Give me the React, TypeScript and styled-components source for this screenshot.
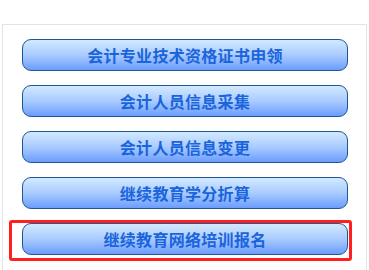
import React from "react";
import styled, { createGlobalStyle } from "styled-components";

const GlobalStyle = createGlobalStyle`
  html, body {
    margin: 0;
    padding: 0;
    background: #fff;
    overflow: hidden;
    font-family: "Noto Sans CJK SC", "Liberation Sans", sans-serif;
  }
`;

const items = [
  "会计专业技术资格证书申领",
  "会计人员信息采集",
  "会计人员信息变更",
  "继续教育学分折算",
  "继续教育网络培训报名",
];

function App() {
  return (
    <>
      <GlobalStyle />
      <StyledPanel>
        {items.map((label, i) => (
          <StyledItem key={label}>
            <StyledButton>{label}</StyledButton>
            {i === items.length - 1 && <StyledHighlight />}
          </StyledItem>
        ))}
      </StyledPanel>
    </>
  );
}

const StyledPanel = styled.div`
  margin: 24px 0 0 2px;
  width: 365px;
  height: 246px;
  border: 1px solid #e3e3e3;
  border-bottom: none;
  padding: 14px 18px 0 19px;
  box-sizing: border-box;
  display: flex;
  flex-direction: column;
  gap: 14px;
`;

const StyledItem = styled.div`
  position: relative;
`;

const StyledButton = styled.div`
  height: 32px;
  box-sizing: border-box;
  border: 1px solid #1d5894;
  border-radius: 9px;
  background: linear-gradient(to bottom, #d2e9ff 0%, #a9cbff 50%, #6c9dfd 100%);
  display: flex;
  align-items: center;
  justify-content: center;
  color: #1a64dc;
  font-size: 16px;
  font-weight: 700;
  letter-spacing: 0.3px;
`;

const StyledHighlight = styled.div`
  position: absolute;
  left: -13px;
  top: -3px;
  width: 343px;
  height: 41px;
  box-sizing: border-box;
  border: 3px solid #ff1f1f;
  border-radius: 3px;
  pointer-events: none;
`;

export default App;
